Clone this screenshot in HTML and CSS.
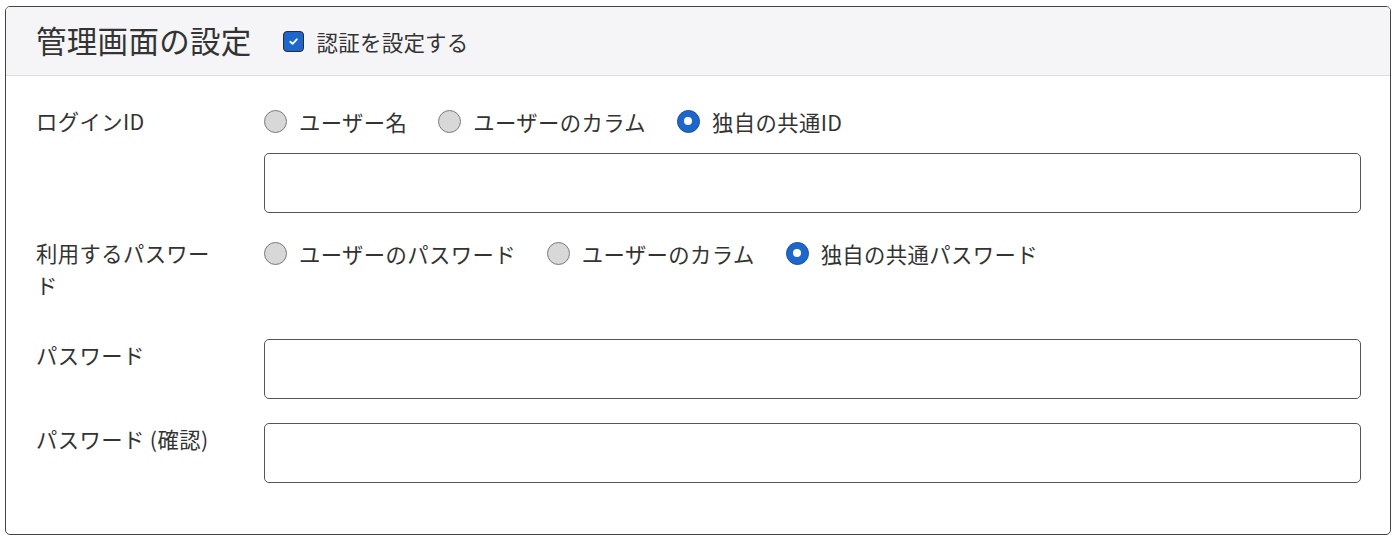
FILE: index.html
```html
<!DOCTYPE html>
<html lang="ja">
<head>
    <meta charset="UTF-8">
    <title>管理画面の設定</title>
    <link rel="stylesheet" href="styles.css">
</head>
<body>
    <div class="card">
        <div class="card-header">
            <h2>管理画面の設定</h2>
            <label class="check">
                <span class="checkbox"><svg viewBox="0 0 12 12" width="11" height="11"><path d="M2.5 6.3 L5 8.6 L9.6 3.6" fill="none" stroke="#fff" stroke-width="2" stroke-linecap="round" stroke-linejoin="round"/></svg></span>
                認証を設定する
            </label>
        </div>

        <div class="card-body">
            <div class="row">
                <div class="label">ログインID</div>
                <div class="field">
                    <div class="radios">
                        <label class="radio"><span class="dot"></span>ユーザー名</label>
                        <label class="radio"><span class="dot"></span>ユーザーのカラム</label>
                        <label class="radio"><span class="dot on"></span>独自の共通ID</label>
                    </div>
                    <div class="input input-below"></div>
                </div>
            </div>

            <div class="row row-tall">
                <div class="label">利用するパスワード</div>
                <div class="field">
                    <div class="radios">
                        <label class="radio"><span class="dot"></span>ユーザーのパスワード</label>
                        <label class="radio"><span class="dot"></span>ユーザーのカラム</label>
                        <label class="radio"><span class="dot on"></span>独自の共通パスワード</label>
                    </div>
                </div>
            </div>

            <div class="row">
                <div class="label">パスワード</div>
                <div class="field">
                    <div class="input"></div>
                </div>
            </div>

            <div class="row">
                <div class="label">パスワード (確認)</div>
                <div class="field">
                    <div class="input"></div>
                </div>
            </div>
        </div>
    </div>
</body>
</html>
```

FILE: styles.css
```css
body {
    margin: 0;
    padding: 6px 9px 10px 5px;
    background: #fff;
    color: #333;
    font-family: "Noto Sans CJK JP", "Liberation Sans", sans-serif;
}

.card {
    border: 1px solid #444;
    border-radius: 5px;
    overflow: hidden;
}

.card-header {
    display: flex;
    align-items: center;
    height: 68px;
    padding: 0 30px;
    background: #f5f5f7;
    border-bottom: 1px solid #dcdcdc;
}

.card-header h2 {
    margin: 0;
    font-size: 30.5px;
    font-weight: 400;
    letter-spacing: 0.3px;
    line-height: 1;
    position: relative;
    top: -1px;
}

.check {
    display: flex;
    align-items: center;
    margin-left: 31px;
    font-size: 21.5px;
    letter-spacing: 0.2px;
}

.checkbox {
    display: flex;
    align-items: center;
    justify-content: center;
    width: 19px;
    height: 19px;
    margin-right: 13px;
    background: #1d67cc;
    border: 1px solid #2b2b2b;
    border-radius: 4px;
}

.card-body {
    padding: 29px 29px 51px 30px;
}

.row {
    display: flex;
    margin-bottom: 24px;
}

.row-tall {
    margin-bottom: 38px;
}

.row:last-child {
    margin-bottom: 0;
}

.label {
    width: 190px;
    flex-shrink: 0;
    margin-right: 38px;
    font-size: 21.33px;
    line-height: 32px;
    letter-spacing: 0.4px;
}

.field {
    flex: 1;
}

.radios {
    display: flex;
    align-items: center;
    height: 32px;
    font-size: 21.33px;
    letter-spacing: 0.4px;
}

.radio {
    display: flex;
    align-items: center;
    margin-right: 31px;
}

.dot {
    box-sizing: border-box;
    width: 23px;
    height: 23px;
    margin-right: 12px;
    background: #d8d8d8;
    border: 1px solid #7a7a7a;
    border-radius: 50%;
    display: flex;
    align-items: center;
    justify-content: center;
}

.dot.on {
    background: #1d67cc;
    border-color: #1a4f99;
}

.dot.on::after {
    content: "";
    width: 8px;
    height: 8px;
    background: #fff;
    border-radius: 50%;
}

.input {
    box-sizing: border-box;
    height: 60px;
    border: 1px solid #555;
    border-radius: 5px;
    background: #fff;
}

.input-below {
    margin-top: 16px;
}
```
